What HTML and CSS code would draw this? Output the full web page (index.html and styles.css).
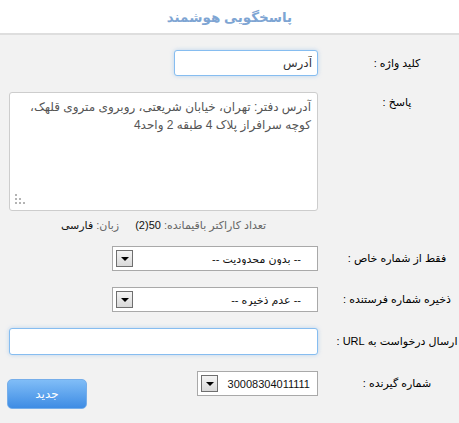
FILE: index.html
```html
<!DOCTYPE html>
<html lang="fa" dir="rtl">
  <head>
    <meta charset="utf-8">
    <title>پاسخگویی هوشمند</title>
    <link rel="stylesheet" href="styles.css">
  </head>
  <body>
    <div class="header">
      <h3 class="title">پاسخگویی هوشمند</h3>
    </div>

    <div class="form">
      <div class="row">
        <label class="label">کلید واژه :</label>
        <div class="field">
          <input type="text" class="text-input keyword" value="آدرس" />
        </div>
      </div>

      <div class="row row-top">
        <label class="label label-top">پاسخ :</label>
        <div class="field answer-box">
          <textarea class="answer">آدرس دفتر: تهران، خیابان شریعتی، روبروی متروی قلهک،
کوچه سرافراز پلاک 4 طبقه 2 واحد4</textarea>
          <span class="grip"></span>
        </div>
      </div>

      <div class="row counter-row">
        <div class="label"></div>
        <div class="field counter">
          <span>تعداد کاراکتر باقیمانده: <b>50</b><b>(2)</b></span>
          <span>زبان: <b>فارسی</b></span>
        </div>
      </div>

      <div class="row">
        <label class="label">فقط از شماره خاص :</label>
        <div class="field">
          <div class="combo combo-wide">
            <select><option>-- بدون محدودیت --</option></select>
            <span class="combo-btn"></span>
          </div>
        </div>
      </div>

      <div class="row">
        <label class="label">ذخیره شماره فرستنده :</label>
        <div class="field">
          <div class="combo combo-wide">
            <select><option>-- عدم ذخیره --</option></select>
            <span class="combo-btn"></span>
          </div>
        </div>
      </div>

      <div class="row">
        <label class="label">ارسال درخواست به URL :</label>
        <div class="field">
          <input type="text" class="text-input url" />
        </div>
      </div>

      <div class="row last-row">
        <label class="label">شماره گیرنده :</label>
        <div class="field field-split">
          <div class="combo combo-small">
            <select><option>30008304011111</option></select>
            <span class="combo-btn"></span>
          </div>
          <input type="button" class="btn-new" value="جدید" />
        </div>
      </div>
    </div>
  </body>
</html>
```

FILE: styles.css
```css
body {
  margin: 0;
  background-color: #f2f2f2;
  font-family: "Liberation Sans", "DejaVu Sans", Tahoma, sans-serif;
  font-size: 11px;
  color: #000;
}
.header {
  background-color: #fff;
  height: 33px;
  border-bottom: 2px solid #dedede;
  display: flex;
  align-items: center;
  justify-content: center;
}
.title {
  margin: 0;
  font-size: 13.5px;
  font-weight: bold;
  color: #7ea5d3;
}
.form {
  padding: 15px 0 0 9px;
}
.row {
  display: flex;
  align-items: center;
  gap: 17px;
  margin-bottom: 16px;
}
.row-top {
  align-items: flex-start;
  margin-bottom: 7px;
}
.label {
  width: 124px;
  flex: none;
  text-align: center;
}
.label-top {
  padding-top: 4px;
}
.field {
  width: 309px;
  display: flex;
}
.field-split {
  justify-content: space-between;
  align-items: flex-start;
}
.text-input {
  box-sizing: border-box;
  height: 26px;
  padding: 0 5px;
  border: 1px solid #86bdf0;
  border-radius: 3px;
  background-color: #fff;
  box-shadow: 0 0 4px rgba(120, 175, 230, 0.45);
  font-family: inherit;
  font-size: 12px;
  color: #333;
  outline: none;
}
.keyword {
  width: 144px;
}
.url {
  width: 309px;
  height: 27px;
}
.answer-box {
  position: relative;
}
.answer {
  box-sizing: border-box;
  width: 309px;
  height: 119px;
  padding: 5px 6px;
  border: 1px solid #cdcdcd;
  border-radius: 3px;
  background-color: #fff;
  font-family: inherit;
  font-size: 12px;
  line-height: 18px;
  color: #555;
  resize: none;
  outline: none;
}
/* dotted resize grip in the bottom-left corner */
.grip {
  position: absolute;
  left: 6px;
  bottom: 7px;
  width: 10px;
  height: 10px;
  background:
    linear-gradient(#b4b4b4, #b4b4b4) 0 0 / 2px 2px no-repeat,
    linear-gradient(#b4b4b4, #b4b4b4) 0 4px / 2px 2px no-repeat,
    linear-gradient(#b4b4b4, #b4b4b4) 4px 4px / 2px 2px no-repeat,
    linear-gradient(#b4b4b4, #b4b4b4) 0 8px / 2px 2px no-repeat,
    linear-gradient(#b4b4b4, #b4b4b4) 4px 8px / 2px 2px no-repeat,
    linear-gradient(#b4b4b4, #b4b4b4) 8px 8px / 2px 2px no-repeat;
}
.counter-row {
  margin-bottom: 14px;
}
.counter {
  justify-content: center;
  gap: 16px;
  color: #666;
  line-height: 14px;
}
.counter b {
  font-weight: normal;
  color: #111;
}
.combo {
  position: relative;
  height: 25px;
}
.combo select {
  box-sizing: border-box;
  width: 100%;
  height: 25px;
  border: 1px solid #a9a9a9;
  background-color: #fff;
  appearance: none;
  -webkit-appearance: none;
  font-family: inherit;
  font-size: 11px;
  color: #111;
  padding: 0 16px 0 24px;
  outline: none;
}
.combo-wide {
  width: 206px;
}
.combo-small {
  width: 121px;
}
.combo-small select {
  padding: 0 7px 0 22px;
  font-size: 11px;
}
/* the drop-down arrow button sits over the select's left edge */
.combo-btn {
  position: absolute;
  left: 4px;
  top: 4px;
  width: 17px;
  height: 17px;
  box-sizing: border-box;
  border: 1px solid #6f6f6f;
  background: linear-gradient(#f4f4f4, #d9d9d9);
  pointer-events: none;
}
.combo-btn::after {
  content: "";
  position: absolute;
  left: 4px;
  top: 6px;
  border-left: 4px solid transparent;
  border-right: 4px solid transparent;
  border-top: 4px solid #000;
}
.last-row {
  align-items: flex-start;
}
.last-row .label {
  padding-top: 6px;
}
.btn-new {
  width: 80px;
  height: 30px;
  margin: 8px 0 0 -2px;
  border: 1px solid #76aeea;
  border-radius: 5px;
  background: linear-gradient(#80bdf7, #3e8ce4);
  color: #fff;
  font-family: inherit;
  font-size: 12px;
  cursor: pointer;
}
```
